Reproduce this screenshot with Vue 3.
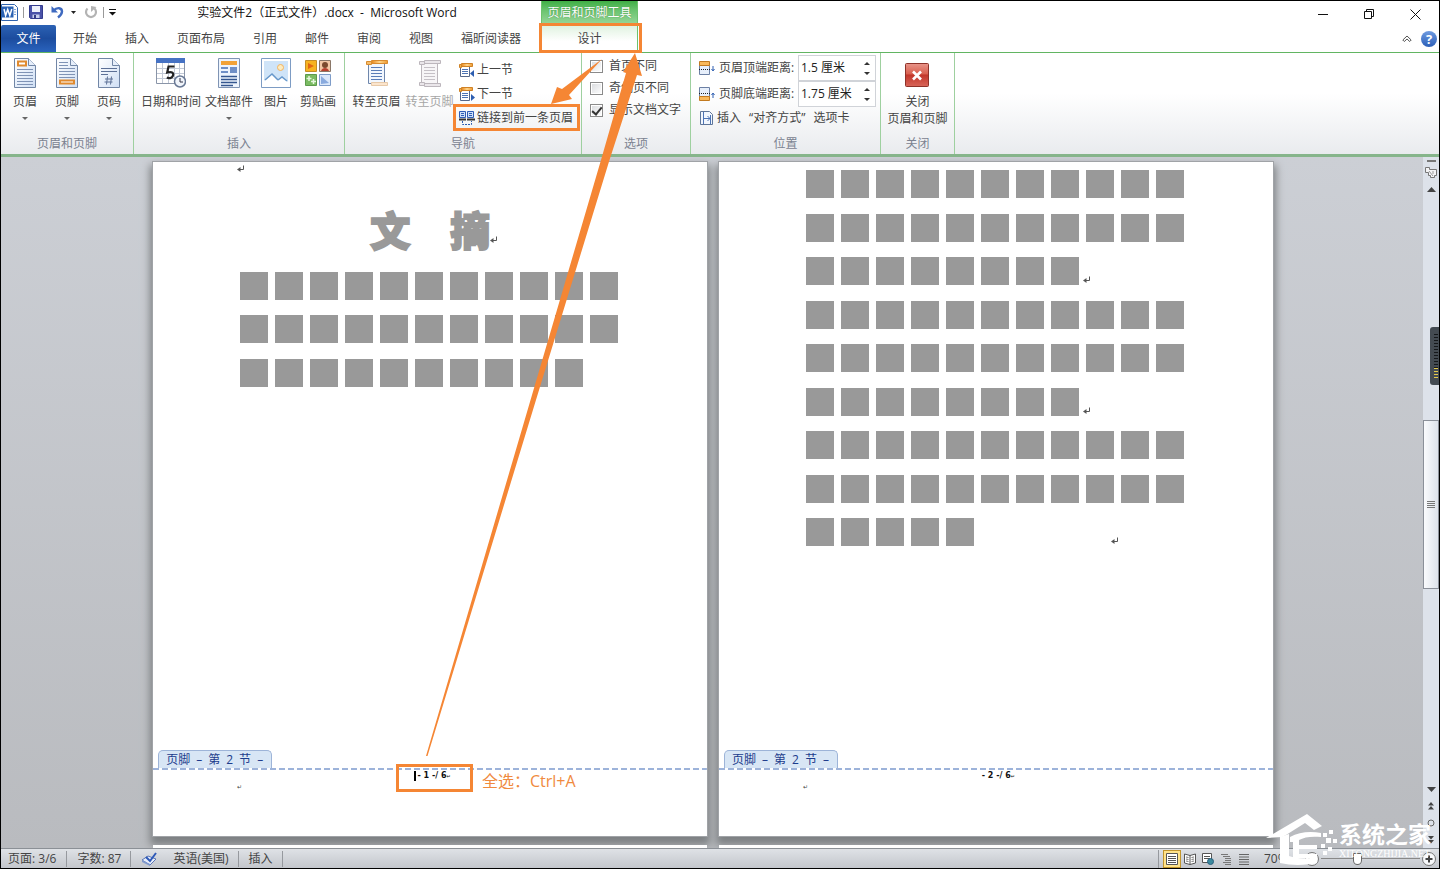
<script setup>
import { ref } from 'vue'

const tabs = ['开始', '插入', '页面布局', '引用', '邮件', '审阅', '视图', '福昕阅读器']
const options = ref([
  { label: '首页不同', on: false },
  { label: '奇偶页不同', on: false },
  { label: '显示文档文字', on: true }
])
const headerGap = ref('1.5 厘米')
const footerGap = ref('1.75 厘米')
const leftRows = [{ n: 11 }, { n: 11 }, { n: 10 }]
const rightRows = [
  { n: 11 }, { n: 11 }, { n: 8, mark: 'near' },
  { n: 11 }, { n: 11 }, { n: 8, mark: 'near' },
  { n: 11 }, { n: 11 }, { n: 5, mark: 'far' }
]
</script>

<template>
  <div class="window">
    <svg class="defs" width="0" height="0" aria-hidden="true">
      <defs>
        <linearGradient id="paper" x1="0" y1="0" x2="1" y2="1">
          <stop offset="0" stop-color="#fff" /><stop offset="1" stop-color="#cfdff5" />
        </linearGradient>
        <linearGradient id="orange" x1="0" y1="0" x2="1" y2="0">
          <stop offset="0" stop-color="#e8861a" /><stop offset=".5" stop-color="#ffd58a" /><stop offset="1" stop-color="#ee9a30" />
        </linearGradient>
        <linearGradient id="red" x1="0" y1="0" x2="0" y2="1">
          <stop offset="0" stop-color="#e8958a" /><stop offset=".45" stop-color="#d9604f" /><stop offset=".5" stop-color="#c2362a" /><stop offset="1" stop-color="#d8665a" />
        </linearGradient>
        <symbol id="enter" viewBox="0 0 8 8">
          <path d="M6.500 0.500v4H2" fill="none" stroke="#555" />
          <path d="M0 4.500L3.500 2v5z" fill="#555" />
        </symbol>
        <symbol id="sheet" viewBox="0 0 22 30">
          <path d="M.5.500h14l7 7v22H.5z" fill="url(#paper)" stroke="#7186a6" />
          <path d="M14.500.500v7h7" fill="#e6eefa" stroke="#7186a6" />
        </symbol>
        <symbol id="section" viewBox="0 0 16 16">
          <path d="M1.500 4.500h9v10h-9z" fill="#fff" stroke="#56688a" />
          <path d="M3 7.500h6M3 9.500h6M3 11.500h6" stroke="#4d74b5" />
          <path d="M2.500 1.500h11v3h-11z" fill="url(#orange)" stroke="#cf8226" />
          <path d="M.5 2.500h2v3h-2z" fill="#f5b04c" stroke="#cf8226" />
        </symbol>
      </defs>
    </svg>

    <header class="top">
      <div class="main-col">
        <div class="title-row">
          <div class="qat">
            <svg width="17" height="17" viewBox="0 0 17 17" aria-label="Word">
              <path d="M.5.500h13l3 3v13H.5z" fill="#fff" stroke="#2f63ae" />
              <path d="M1 2.500h11.500v11H1z" fill="#2b62b3" />
              <path d="M3 5l1.600 6.500L6.700 5.500l2.100 6L10.800 5" fill="none" stroke="#fff" stroke-width="1.500" />
              <path d="M13 5.500h2M13 8h2M13 10.500h2" stroke="#7fa2d6" />
            </svg>
            <i class="bar"></i>
            <button aria-label="保存">
              <svg width="14" height="14" viewBox="0 0 14 14"><path d="M.5.500h13v13h-12l-1-1z" fill="#4a52a8" stroke="#343c8e" /><path d="M3 1h8v6H3z" fill="#eef1fb" /><path d="M3.500 9.500h7V13h-7z" fill="#c9d0ec" /><path d="M5 10h2v3H5z" fill="#333b84" /></svg>
            </button>
            <button class="undo" aria-label="撤消">
              <svg width="14" height="14" viewBox="0 0 14 14"><path d="M2.500 5.500C6 2 11 2.500 11 6.500c0 3-2 4.500-4 6" fill="none" stroke="#3f6ac0" stroke-width="2.400" /><path d="M.5 1v6.500H7z" fill="#3f6ac0" /></svg>
              <svg width="5" height="3" viewBox="0 0 5 3"><path d="M0 0h5L2.500 3z" fill="#222" /></svg>
            </button>
            <button aria-label="恢复" class="redo">
              <svg width="14" height="14" viewBox="0 0 14 14"><path d="M3.500 3.500a5 5 0 1 0 7 0" fill="none" stroke="#b3b3b3" stroke-width="2.200" /><path d="M7 1v6l5.500-5z" fill="#b3b3b3" /></svg>
            </button>
            <i class="bar"></i>
            <button aria-label="自定义快速访问工具栏">
              <svg width="7" height="7" viewBox="0 0 7 7"><path d="M0 .5h7" stroke="#111" /><path d="M0 3h7L3.500 6.500z" fill="#111" /></svg>
            </button>
          </div>
          <h1>实验文件2（正式文件）.docx&nbsp; -&nbsp; Microsoft Word</h1>
        </div>
        <nav class="tabs">
          <button class="file">文件</button>
          <button v-for="t in tabs" :key="t" class="tab">{{ t }}</button>
        </nav>
      </div>
      <div class="context">
        <div class="context-name">页眉和页脚工具</div>
        <button class="context-tab">设计</button>
      </div>
      <div class="end-col">
        <div class="controls">
          <button aria-label="最小化"><svg width="11" height="11" viewBox="0 0 11 11"><path d="M0 5.500h10" stroke="#111" /></svg></button>
          <button aria-label="还原"><svg width="11" height="11" viewBox="0 0 11 11"><path d="M.5 2.500h7v7h-7zM2.500 2.500v-2h7v7h-2" fill="none" stroke="#111" /></svg></button>
          <button aria-label="关闭窗口"><svg width="11" height="11" viewBox="0 0 11 11"><path d="M.5.500l10 10M10.500.500l-10 10" stroke="#111" /></svg></button>
        </div>
        <div class="help-row">
          <button aria-label="功能区最小化"><svg width="10" height="8" viewBox="0 0 10 8"><path d="M.8 5L5 1l4.200 4-1.500 1.500L5 4 2.300 6.500z" fill="#fff" stroke="#555" /></svg></button>
          <button aria-label="帮助" class="help">?</button>
        </div>
      </div>
    </header>

    <section class="ribbon">
      <div class="group">
        <div class="items">
          <button class="big">
            <svg width="22" height="30"><use href="#sheet" /><path d="M4 3.500h8v4H4z" fill="#fff" stroke="#e08a2e" stroke-width="2" /><path d="M3 11.500h16M3 14.500h16M3 17.500h16M3 20.500h16M3 23.500h16M3 26.500h16" stroke="#7f93b5" /></svg>
            <span>页眉</span><i class="drop"></i>
          </button>
          <button class="big">
            <svg width="22" height="30"><use href="#sheet" /><path d="M3 4.500h9M3 7.500h9M3 10.500h16M3 13.500h16M3 16.500h16M3 19.500h16" stroke="#7f93b5" /><path d="M4 22.500h14v3H4z" fill="#fff" stroke="#e08a2e" stroke-width="2" /></svg>
            <span>页脚</span><i class="drop"></i>
          </button>
          <button class="big">
            <svg width="22" height="30"><use href="#sheet" /><path d="M3 10.500h16M3 13.500h16M3 16.500h7M9.500 18.500l-1 8M13.500 18.500l-1 8M7 21h8M6.500 24h8" stroke="#5c7096" fill="none" /></svg>
            <span>页码</span><i class="drop"></i>
          </button>
        </div>
        <div class="name">页眉和页脚</div>
      </div>

      <div class="group insert">
        <div class="items">
          <button class="big">
            <svg width="30" height="30" viewBox="0 0 30 30"><path d="M.5.500h28v25H.5z" fill="#fff" stroke="#8a95a8" /><path d="M0 0h29v5H0z" fill="#4672c4" /><path d="M1 10.500h27M1 15.500h27M1 20.500h27M6.500 5v20M12.500 5v20M18.500 5v20M23.500 5v20" stroke="#c2c9d6" /><path d="M18.500 8.500h-6l-1.300 6c5-1.500 7 .5 5.600 3.500-1 2.500-4 2.600-6 1.600" fill="none" stroke="#222" stroke-width="2.200" /><circle cx="24" cy="23.500" r="5.500" fill="#f1f5fb" stroke="#687894" stroke-width="1.500" /><path d="M24 20v4h3" fill="none" stroke="#334" /></svg>
            <span>日期和时间</span>
          </button>
          <button class="big">
            <svg width="22" height="30" viewBox="0 0 22 30"><path d="M.5.500h21v29H.5z" fill="#edf4fd" stroke="#7f94b4" /><path d="M3 3h16v4H3z" fill="#f2a237" /><path d="M3 9h7v2H3zM12 9h7v6h-7zM3 13h7v2H3z" fill="#6f8fc6" /><path d="M3 18.500h16M3 21.500h16M3 24.500h16M3 27.500h12" stroke="#34568f" stroke-width="1.500" /></svg>
            <span>文档部件</span><i class="drop"></i>
          </button>
          <button class="big">
            <svg width="30" height="30" viewBox="0 0 30 30"><path d="M.5.500h29v29H.5z" fill="#fff" stroke="#7d9cc4" /><path d="M3 3h24v24H3z" fill="#cfe4f8" /><circle cx="19.500" cy="9.500" r="3" fill="#fdecc0" stroke="#f4b35d" /><path d="M3 23l8-7 6 6 4-3 6 5v3H3z" fill="#fff" /><path d="M4 22l7-6 6 6M17 22l4-3 5 4" fill="none" stroke="#6798cb" stroke-width="1.500" /></svg>
            <span>图片</span>
          </button>
          <button class="big">
            <svg width="27" height="30" viewBox="0 0 27 30"><path d="M.5 2.500h11v11H.5z" fill="#f7b321" stroke="#c48e28" /><path d="M3 5l6 3-6 3z" fill="#e26713" /><path d="M14.500 2.500h11v11h-11z" fill="#f2c7a5" stroke="#8a7768" /><circle cx="20" cy="7" r="3" fill="#7b4a2e" /><path d="M16 13c1-4 7-4 8 0z" fill="#b8412f" /><path d="M.5 16.500h11v11H.5z" fill="#7abb62" stroke="#5d9a4c" /><path d="M4 18v5M1.500 20.500h5M8.500 21v5M6 23.500h5" stroke="#e7f7df" stroke-width="1.500" /><path d="M14.500 16.500h11v11h-11z" fill="#dbe8fa" stroke="#7e9cc8" /><path d="M16 18v8l8-1z" fill="#89aade" /></svg>
            <span>剪贴画</span>
          </button>
        </div>
        <div class="name">插入</div>
      </div>

      <div class="group navg">
        <div class="items">
          <button class="big">
            <svg width="22" height="30" viewBox="0 0 22 30"><path d="M2.500 5.500h16v20h-16z" fill="#f2f7fe" stroke="#6f87ac" /><path d="M5 9.500h11M5 12.500h11M5 15.500h11M5 18.500h11M5 21.500h11" stroke="#5a7db8" /><path d="M5.500 2.500h16v3h-16z" fill="url(#orange)" stroke="#d98c30" /><path d="M.5 3.500h5v3h-5z" fill="#f6bd68" stroke="#d98c30" /><path d="M5.500 24.500h16v3h-16z" fill="#fbe5cd" stroke="#e7c9a8" /></svg>
            <span>转至页眉</span>
          </button>
          <button class="big" disabled>
            <svg width="22" height="30" viewBox="0 0 22 30"><path d="M2.500 5.500h16v20h-16z" fill="#f7f5f7" stroke="#bcb6bc" /><path d="M5 9.500h11M5 12.500h11M5 15.500h11M5 18.500h11M5 21.500h11" stroke="#c5c0c6" /><path d="M5.500 2.500h16v3h-16zM.5 3.500h5v3h-5zM5.500 25.500h16v3h-16zM.5 24.500h5v3h-5z" fill="#eae6ea" stroke="#bcb6bc" /></svg>
            <span>转至页脚</span>
          </button>
          <div class="stack">
            <button class="small">
              <svg width="16" height="16"><use href="#section" /><path d="M15 8v7l-4-3.500z" fill="#2c5db0" /></svg>上一节
            </button>
            <button class="small">
              <svg width="16" height="16"><use href="#section" /><path d="M12 8v7l4-3.500z" fill="#2c5db0" /></svg>下一节
            </button>
            <button class="small">
              <svg width="16" height="16" viewBox="0 0 16 16"><path d="M.5 1.500h6v6h-6zM8.500 1.500h6v6h-6z" fill="#cfe0f7" stroke="#2f5db5" /><path d="M2 3.500h3M2 5.500h3M10 3.500h3M10 5.500h3" stroke="#2f5db5" /><path d="M0 9.500h7M8 9.500h8" stroke="#333" stroke-width="2" /><path d="M3.500 11v3.500h9V11" fill="none" stroke="#2c5db0" stroke-dasharray="2 1" /></svg>链接到前一条页眉
            </button>
          </div>
        </div>
        <div class="name">导航</div>
      </div>

      <div class="group opts">
        <div class="items checks">
          <label v-for="o in options" :key="o.label"><input v-model="o.on" type="checkbox" />{{ o.label }}</label>
        </div>
        <div class="name">选项</div>
      </div>

      <div class="group pos">
        <div class="items lines">
          <div class="line">
            <svg width="16" height="16" viewBox="0 0 16 16"><path d="M.5 4.500h10v10h-10z" fill="#e7effb" stroke="#6c80a4" /><path d="M.5 1.500h10v4h-10z" fill="#f9b85a" stroke="#c27a20" /><path d="M0 9.500h12" stroke="#222" stroke-dasharray="1 1" /><path d="M14 6v4M12.500 9l1.500 2 1.500-2" fill="none" stroke="#2c5db0" /></svg>
            <label for="hgap">页眉顶端距离:</label>
            <span class="spin"><input id="hgap" v-model="headerGap" type="text" /><span class="steps"><button class="up" aria-label="增大页眉距离"></button><button class="down" aria-label="减小页眉距离"></button></span></span>
          </div>
          <div class="line">
            <svg width="16" height="16" viewBox="0 0 16 16"><path d="M.5 1.500h10v10h-10z" fill="#e7effb" stroke="#6c80a4" /><path d="M.5 10.500h10v4h-10z" fill="#f9b85a" stroke="#c27a20" /><path d="M0 7.500h12" stroke="#222" stroke-dasharray="1 1" /><path d="M14 12V8M12.500 9L14 7l1.500 2" fill="none" stroke="#2c5db0" /></svg>
            <label for="fgap">页脚底端距离:</label>
            <span class="spin"><input id="fgap" v-model="footerGap" type="text" /><span class="steps"><button class="up" aria-label="增大页脚距离"></button><button class="down" aria-label="减小页脚距离"></button></span></span>
          </div>
          <button class="small align">
            <svg width="16" height="16" viewBox="0 0 16 16"><path d="M1.500 1.500h9l3 3v10h-12z" fill="#f2f7fe" stroke="#5f7699" /><path d="M4.500 2v12M11.500 5v9M5 8.500h6M8.500 6l2.500 2.500L8.500 11" fill="none" stroke="#4d74b5" /></svg>插入<span class="quote">“对齐方式”</span>选项卡
          </button>
        </div>
        <div class="name">位置</div>
      </div>

      <div class="group close">
        <div class="items">
          <button class="big">
            <svg width="26" height="30" viewBox="0 0 26 30"><rect x="1.500" y="5.500" width="23" height="23" rx="1" fill="url(#red)" stroke="#8e3229" /><path d="M9 13.500l8 8M17 13.500l-8 8" stroke="#fff" stroke-width="2.600" /></svg>
            <span>关闭<br />页眉和页脚</span>
          </button>
        </div>
        <div class="name">关闭</div>
      </div>
    </section>

    <main class="work">
      <div class="canvas">
        <div class="pages">
          <article class="page">
            <div class="blank"><svg width="8" height="8"><use href="#enter" /></svg></div>
            <h2>文　摘<svg width="8" height="8"><use href="#enter" /></svg></h2>
            <div class="rows short">
              <div v-for="(r, i) in leftRows" :key="i" class="row"><i v-for="n in r.n" :key="n"></i></div>
            </div>
            <footer>
              <div class="ftag"><span>页脚</span><span>–</span><span>第</span><span>2</span><span>节</span><span>–</span></div>
              <div class="fbody"><p class="num"><b class="caret"></b>- 1 -/ 6<small>↵</small></p><p class="dot">↵</p></div>
            </footer>
          </article>
          <article class="page">
            <div class="rows">
              <div v-for="(r, i) in rightRows" :key="i" class="row">
                <i v-for="n in r.n" :key="n"></i>
                <svg v-if="r.mark" :class="r.mark" width="8" height="8"><use href="#enter" /></svg>
              </div>
            </div>
            <footer>
              <div class="ftag"><span>页脚</span><span>–</span><span>第</span><span>2</span><span>节</span><span>–</span></div>
              <div class="fbody"><p class="num">- 2 -/ 6<small>↵</small></p><p class="dot">↵</p></div>
            </footer>
          </article>
        </div>
        <div class="next"><span></span><span></span></div>
      </div>
      <aside class="scroll">
        <i class="split"></i>
        <button aria-label="标尺"><svg width="12" height="12" viewBox="0 0 12 12"><path d="M.5 1.500h4v2h7v6h-2v2h-4v-2h-2v-3h-3z" fill="#f4f4f6" stroke="#777" /><path d="M4 5l4 5M8 5v3" stroke="#999" /></svg></button>
        <button class="arrow" aria-label="向上滚动"><svg width="9" height="5"><path d="M0 5l4.500-5L9 5z" fill="#444" /></svg></button>
        <div class="track"><div class="thumb"><i></i><i></i><i></i><i></i></div></div>
        <button class="arrow" aria-label="向下滚动"><svg width="9" height="5"><path d="M0 0l4.500 5L9 0z" fill="#444" /></svg></button>
        <button aria-label="前一页"><svg width="6" height="8"><path d="M0 3.500L3 0l3 3.500zM0 7.500L3 4l3 3.500z" fill="#444" /></svg></button>
        <button aria-label="选择浏览对象"><svg width="8" height="8"><circle cx="4" cy="4" r="3" fill="none" stroke="#666" /></svg></button>
        <button aria-label="下一页"><svg width="6" height="8"><path d="M0 0l3 3.500L6 0zM0 4l3 3.500L6 4z" fill="#444" /></svg></button>
      </aside>
    </main>

    <footer class="status">
      <span class="cell">页面: 3/6</span>
      <span class="cell">字数: 87</span>
      <span class="cell lang">
        <svg width="17" height="15" viewBox="0 0 17 15"><path d="M1 9l6-4 8 3-6 6z" fill="#e8eefb" stroke="#5a76b5" /><path d="M1 9v2l8 4v-2z" fill="#7f98cc" /><path d="M5 6l4 4 6-8" fill="none" stroke="#2e59b8" stroke-width="2" /></svg>英语(美国)
      </span>
      <span class="cell">插入</span>
      <span class="fill"></span>
      <div class="views">
        <button class="on" aria-label="页面视图"><svg width="12" height="12"><path d="M.5.500h11v11H.5z" fill="#fff" stroke="#555" /><path d="M2 3.500h8M2 5.500h8M2 7.500h8M2 9.500h8" stroke="#555" /></svg></button>
        <button aria-label="阅读版式"><svg width="12" height="12"><path d="M6 2.500L.5 1v9L6 11.500 11.500 10V1zM6 2.500v9" fill="#fff" stroke="#555" /><path d="M2 4l2.500.5M2 6l2.500.5M2 8l2.500.5M10 4l-2.500.5M10 6l-2.500.5M10 8l-2.500.5" stroke="#777" /></svg></button>
        <button aria-label="Web 版式"><svg width="12" height="12"><path d="M.5.500h9v9h-9z" fill="#fff" stroke="#555" /><path d="M2 3.500h6M2 5.500h6" stroke="#555" /><circle cx="8.500" cy="8.500" r="3" fill="#3c8a9e" stroke="#2a5f7c" /></svg></button>
        <button aria-label="大纲视图"><svg width="12" height="12"><path d="M1 1.500h7M3 3.500h7M5 5.500h6M5 7.500h6M3 9.500h8M5 11.500h6" stroke="#777" /></svg></button>
        <button aria-label="草稿"><svg width="12" height="12"><path d="M1 1.500h10M1 4h10M1 6.500h10M1 9h10M1 11.500h10" stroke="#666" /></svg></button>
      </div>
      <span class="pct">70%</span>
      <div class="zoom">
        <button class="round" aria-label="缩小"><svg width="14" height="14"><circle cx="7" cy="7" r="6.500" fill="#f7f8fa" stroke="#777" /><path d="M3.500 7h7" stroke="#444" stroke-width="2" /></svg></button>
        <input type="range" min="10" max="180" value="70" aria-label="显示比例" />
        <button class="round" aria-label="放大"><svg width="14" height="14"><circle cx="7" cy="7" r="6.500" fill="#f7f8fa" stroke="#777" /><path d="M3.500 7h7M7 3.500v7" stroke="#444" stroke-width="2" /></svg></button>
      </div>
    </footer>

    <svg class="notes" width="1440" height="869" viewBox="0 0 1440 869" aria-hidden="true">
      <g fill="none" stroke="#f58634" stroke-width="3">
        <rect x="540.500" y="24.500" width="100" height="27" />
        <rect x="454.500" y="105.500" width="124" height="24" />
        <rect x="397.500" y="765.500" width="74" height="25" />
      </g>
      <path d="M426 756L532 395 601 160 626 73l-3-1L635 53l7 23-5-1L609.500 160 537.500 395 427.500 756z" fill="#f58634" />
      <path d="M602 59l-33 36 3 4-21 5 6-17 5 2z" fill="#f58634" />
    </svg>
    <span class="hint">全选：Ctrl+A</span>
    <i class="gauge"><b></b></i>
    <div class="mark">
      <svg width="73" height="54" viewBox="0 0 73 54" fill="#fff">
        <path d="M0 25L41 1l15 12-8 4-9-7-19 12-4 2z" />
        <path d="M14 24l9-3v22c8 3 18 3 28 1v6c-10 2-24 3-37 0z" />
        <path d="M24 24c9-5 20-6 31-4v4c-9-1-17 0-22 3v5h18v4H33v5h18v4H27V29h-3z" />
        <path d="M57 20h4v4h-4zM63 17h4v4h-4zM60 25h5v5h-5zM67 26h4v4h-4zM55 31h4v4h-4zM62 34h4v4h-4zM57 38h4v4h-4z" />
      </svg>
      <div><strong>系统之家</strong><em>XITONGZHIJIA.NET</em></div>
    </div>
  </div>
</template>

<style>
body { margin: 0; overflow: hidden; }
</style>

<style scoped>
* { box-sizing: border-box; }
.window {
  position: relative; display: flex; flex-direction: column; height: 100vh; overflow: hidden;
  border: 1px solid #000; background: #fff; color: #444;
  font-family: "Open Sans", "Noto Sans CJK SC", sans-serif; font-size: 12px; line-height: 16px;
}
button { border: 0; padding: 0; margin: 0; background: none; font: inherit; color: inherit; }
input { font: inherit; }
svg { display: block; flex: none; }
.defs { position: absolute; }
h1, h2, p { margin: 0; font-weight: normal; }

.top { display: flex; height: 52px; border-bottom: 1px solid #62b562; }
.title-row { display: flex; align-items: center; height: 24px; }
.qat { display: flex; align-items: center; gap: 8px; width: 118px; padding-bottom: 2px; }
.qat .bar { width: 1px; height: 11px; background: #999; margin: 0 -3px; }
.qat button { display: flex; align-items: center; }
.undo { gap: 6px; }
h1 { flex: 1; text-align: center; font-size: 12px; color: #111; white-space: nowrap; }
.tabs { display: flex; }
.tabs button { height: 27px; }
.file { width: 55px; margin-right: 3px; background: linear-gradient(#2c62b4, #1c4c9e 50%, #2a63bd); color: #fff; border-radius: 2px 2px 0 0; }
.tab { padding: 0 14px; }
.context { width: 97px; margin-left: 6px; display: flex; flex-direction: column; border: solid #6dc36d; border-width: 0 1px; }
.context-name { height: 24px; line-height: 24px; text-align: center; color: #fff; background: linear-gradient(#3fae45, #6cc470 40%, #9ad79b); text-shadow: 0 0 1px #2f7a33; white-space: nowrap; }
.context-tab { height: 27px; background: linear-gradient(#dff2df, #fff 60%); }
.end-col { flex: 1; }
.controls { display: flex; justify-content: flex-end; height: 26px; padding-right: 1px; }
.controls button { width: 46px; display: flex; align-items: center; justify-content: center; }
.help-row { display: flex; justify-content: flex-end; align-items: center; gap: 9px; height: 23px; padding-right: 2px; }
.help { width: 16px; height: 16px; border-radius: 8px; background: linear-gradient(#6f9be0, #2c5fb8); color: #fff; font-size: 13px; font-weight: bold; }

.ribbon { display: flex; height: 104px; background: linear-gradient(#fff 40%, #e9ebee); border-bottom: 3px solid #86b58b; }
.group { display: flex; flex-direction: column; width: 133px; border-right: 1px solid #9ed09f; }
.insert { width: 211px; }
.navg { width: 237px; }
.opts { width: 109px; }
.pos { width: 190px; }
.close { width: 74px; }
.items { display: flex; flex: 1; padding: 5px 3px 0; }
.insert .items, .navg .items { padding-left: 5px; }
.name { height: 20px; line-height: 20px; text-align: center; color: #7b8290; }
.big { display: flex; flex-direction: column; align-items: center; min-width: 42px; padding: 0 2px; height: 66px; white-space: nowrap; }
.big span { margin-top: 5px; line-height: 17px; }
.navg .big { width: 53px; padding: 0; }
.big:disabled { color: #a6a6a6; }
.drop { margin-top: 7px; border: 3px solid transparent; border-top-color: #666; border-bottom: 0; }
.close .items { justify-content: center; padding: 5px 0 0; }
.stack { display: flex; flex-direction: column; padding-left: 3px; }
.small { display: flex; align-items: center; gap: 2px; height: 24px; white-space: nowrap; }
.checks { flex-direction: column; padding: 2px 8px 0; }
.checks label { display: flex; align-items: center; gap: 6px; height: 22px; white-space: nowrap; }
.checks input { appearance: none; width: 13px; height: 13px; margin: 0; border: 1px solid #8a8a8a; background: linear-gradient(135deg, #d8dadd, #fff); display: grid; place-items: center; box-shadow: inset 0 0 0 1px #fff; }
.checks input:checked::after { content: ""; width: 4px; height: 8px; border: solid #333; border-width: 0 2px 2px 0; transform: rotate(40deg); }
.lines { flex-direction: column; padding: 2px 4px 0 8px; }
.line { display: flex; align-items: center; height: 26px; }
.line label { margin-left: 4px; width: 79px; white-space: nowrap; }
.spin { display: flex; flex: 1; height: 26px; border: 1px solid #d0d3d8; background: #fff; }
.spin input { width: 60px; flex: 1; min-width: 0; border: 0; padding: 0 2px; background: none; outline: 0; color: #222; }
.steps { display: flex; flex-direction: column; justify-content: center; gap: 7px; padding-right: 5px; }
.steps button { border: 3px solid transparent; }
.steps .up { border-bottom-color: #333; border-top: 0; }
.steps .down { border-top-color: #333; border-bottom: 0; }
.align { height: 22px; }
.quote { padding: 0 6px; }

.work { display: flex; flex: 1; min-height: 0; }
.canvas { flex: 1; display: flex; flex-direction: column; padding-top: 5px; gap: 9px; overflow: hidden; background: linear-gradient(#cccfd5, #b9bbbf); }
.pages { flex: 1; display: flex; justify-content: center; gap: 12px; padding-left: 2px; }
.page { display: flex; flex-direction: column; width: 39%; max-width: 554px; background: #fff; box-shadow: 0 0 0 1px #a0a3a7, 0 6px 8px 3px #7d8083; }
.next { display: flex; justify-content: center; gap: 12px; height: 3px; padding-left: 2px; z-index: 1; }
.next span { width: 39%; max-width: 554px; background: #fff; }
.blank { padding: 3px 0 0 84px; height: 46px; }
h2 { display: flex; align-items: flex-end; height: 44px; padding-left: 217px; font-family: "Noto Sans CJK SC", sans-serif; font-size: 40px; line-height: 46px; font-weight: 900; color: #999; -webkit-text-stroke: 2px #999; white-space: nowrap; }
h2 svg { margin-bottom: 8px; }
.rows { padding: 8px 0 0 87px; }
.row { display: flex; gap: 7px; height: 28px; margin-bottom: 15px; }
.row:nth-child(odd) { margin-bottom: 16px; }
.rows.short { padding-top: 20px; }
.short .row { margin-bottom: 16px; }
.short .row:first-child { margin-bottom: 15px; }
.row i { width: 28px; background: #999; }
.row svg { margin-top: 19px; margin-left: -3px; }
.row .far { margin-left: 130px; }
.page footer { margin-top: auto; }
.ftag { display: flex; gap: 6px; width: 114px; height: 18px; margin-left: 5px; padding: 1px 0 0 7px; border: 1px solid #9db4d8; border-bottom: 0; border-radius: 5px 5px 0 0; background: #d8e6f5; color: #1c3c8c; white-space: nowrap; }
.fbody { height: 68px; background: repeating-linear-gradient(90deg, #9db3da 0 6px, #fff 6px 9px) top / 100% 2px no-repeat; }
.num { display: flex; align-items: center; justify-content: center; height: 16px; font-family: "DejaVu Sans", sans-serif; font-size: 8px; line-height: 14px; font-weight: bold; color: #111; padding-left: 5px; }
.num small { font-size: 5px; font-weight: normal; }
.caret { width: 2px; height: 10px; margin-right: 1px; background: #000; }
.dot { padding-left: 84px; font-size: 6px; line-height: 6px; }

.scroll { display: flex; flex-direction: column; align-items: center; width: 16px; gap: 1px; background: #dde2ea; }
.scroll button { display: flex; align-items: center; justify-content: center; width: 16px; height: 16px; }
.split { width: 9px; height: 2px; margin: 3px 0 1px; background: #777; }
.track { flex: 1; width: 16px; display: flex; flex-direction: column; }
.track::before { content: ""; flex: 221; }
.track::after { content: ""; flex: 190; }
.thumb { flex: 166; display: flex; flex-direction: column; align-items: center; justify-content: center; gap: 1px; border: 1px solid #8b9099; background: linear-gradient(90deg, #fafbfd, #dde2ea); }
.thumb i { width: 8px; height: 1px; background: #777; }

.status { display: flex; align-items: center; height: 20px; border-top: 1px solid #8b9096; background: linear-gradient(#dfe2e6, #c3c6cc); }
.cell { display: flex; align-items: center; height: 16px; padding: 0 9px 0 10px; border-right: 1px solid #96999e; white-space: nowrap; }
.cell:first-child { padding-left: 7px; padding-right: 10px; }
.lang { gap: 15px; }
.fill { flex: 1; }
.views { display: flex; height: 18px; padding-left: 4px; border-left: 1px solid #96999e; }
.views button { display: flex; align-items: center; justify-content: center; width: 18px; }
.views .on { border: 1px solid #c2952c; background: #ffe38b; }
.pct { width: 52px; padding-left: 11px; }
.zoom { display: flex; align-items: center; width: 134px; padding-right: 3px; }
.zoom input { appearance: none; flex: 1; min-width: 0; height: 14px; margin: 0 2px; background: linear-gradient(#888, #888) center / 100% 1px no-repeat; }
.zoom input::-webkit-slider-thumb { appearance: none; width: 9px; height: 12px; border: 1px solid #666; border-radius: 1px 1px 5px 5px; background: #fff; }

.notes { position: absolute; left: -1px; top: -1px; pointer-events: none; }
.hint { position: absolute; left: 481px; top: 769px; font-size: 16px; line-height: 22px; color: #f08a3e; white-space: nowrap; }
.gauge { position: absolute; right: 0; top: 326px; width: 9px; height: 58px; border-radius: 3px 0 0 3px; background: #444b52; padding: 7px 1px 0 4px; }
.gauge b { display: block; height: 46px; background: repeating-linear-gradient(#15181b 0 1px, transparent 1px 3px) top / 100% 34px no-repeat, repeating-linear-gradient(#e3c94c 0 1px, transparent 1px 3px) bottom / 100% 12px no-repeat; }
.mark { position: absolute; right: 7px; bottom: 1px; display: flex; color: #fff; pointer-events: none; }
.mark div { display: flex; flex-direction: column; padding-top: 8px; width: 93px; }
.mark strong { font-size: 23px; line-height: 26px; white-space: nowrap; }
.mark em { font: 10px/14px "Liberation Serif", serif; }
</style>
